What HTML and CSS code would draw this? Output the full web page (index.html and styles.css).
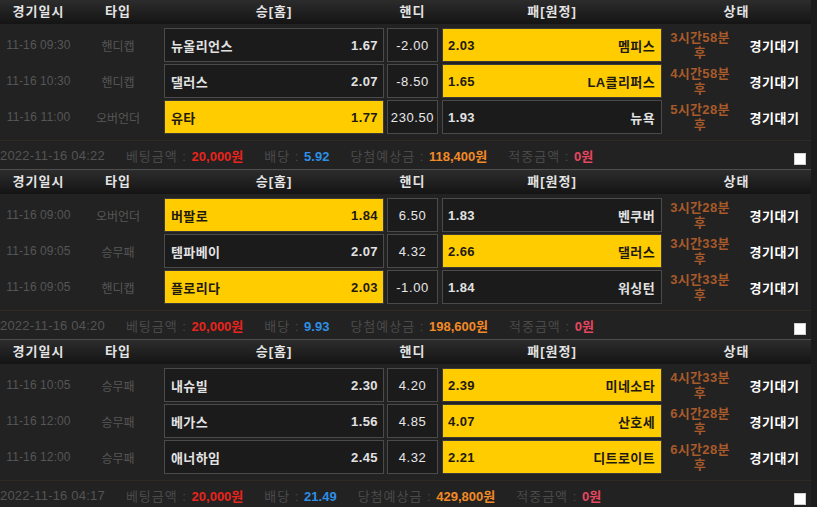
FILE: index.html
```html
<!DOCTYPE html>
<html lang="ko">
<head>
<meta charset="utf-8">
<link rel="stylesheet" href="styles.css">
</head>
<body>
<div class="wrap">

  <section class="bet first">
    <div class="head">
      <div class="c-date">경기일시</div><div class="c-type">타입</div><div class="c-home">승[홈]</div><div class="c-hand">핸디</div><div class="c-away">패[원정]</div><div class="c-stat">상태</div>
    </div>
    <div class="body">
      <div class="row">
        <div class="c-date">11-16 09:30</div><div class="c-type">핸디캡</div>
        <div class="box home"><span class="nm">뉴올리언스</span><span class="od">1.67</span></div>
        <div class="box hand">-2.00</div>
        <div class="box away sel"><span class="od">2.03</span><span class="nm">멤피스</span></div>
        <div class="c-time">3시간58분<br>후</div><div class="c-state">경기대기</div>
      </div>
      <div class="row">
        <div class="c-date">11-16 10:30</div><div class="c-type">핸디캡</div>
        <div class="box home"><span class="nm">댈러스</span><span class="od">2.07</span></div>
        <div class="box hand">-8.50</div>
        <div class="box away sel"><span class="od">1.65</span><span class="nm">LA클리퍼스</span></div>
        <div class="c-time">4시간58분<br>후</div><div class="c-state">경기대기</div>
      </div>
      <div class="row">
        <div class="c-date">11-16 11:00</div><div class="c-type">오버언더</div>
        <div class="box home sel"><span class="nm">유타</span><span class="od">1.77</span></div>
        <div class="box hand">230.50</div>
        <div class="box away"><span class="od">1.93</span><span class="nm">뉴욕</span></div>
        <div class="c-time">5시간28분<br>후</div><div class="c-state">경기대기</div>
      </div>
    </div>
    <div class="foot">
      <span class="f-date">2022-11-16 04:22</span>
      <span class="f-item">베팅금액 : <b class="red">20,000원</b></span>
      <span class="f-item">배당 : <b class="blue">5.92</b></span>
      <span class="f-item">당첨예상금 : <b class="orange">118,400원</b></span>
      <span class="f-item">적중금액 : <b class="pink">0원</b></span>
      <span class="chk"></span>
    </div>
  </section>

  <section class="bet">
    <div class="head">
      <div class="c-date">경기일시</div><div class="c-type">타입</div><div class="c-home">승[홈]</div><div class="c-hand">핸디</div><div class="c-away">패[원정]</div><div class="c-stat">상태</div>
    </div>
    <div class="body">
      <div class="row">
        <div class="c-date">11-16 09:00</div><div class="c-type">오버언더</div>
        <div class="box home sel"><span class="nm">버팔로</span><span class="od">1.84</span></div>
        <div class="box hand">6.50</div>
        <div class="box away"><span class="od">1.83</span><span class="nm">벤쿠버</span></div>
        <div class="c-time">3시간28분<br>후</div><div class="c-state">경기대기</div>
      </div>
      <div class="row">
        <div class="c-date">11-16 09:05</div><div class="c-type">승무패</div>
        <div class="box home"><span class="nm">템파베이</span><span class="od">2.07</span></div>
        <div class="box hand">4.32</div>
        <div class="box away sel"><span class="od">2.66</span><span class="nm">댈러스</span></div>
        <div class="c-time">3시간33분<br>후</div><div class="c-state">경기대기</div>
      </div>
      <div class="row">
        <div class="c-date">11-16 09:05</div><div class="c-type">핸디캡</div>
        <div class="box home sel"><span class="nm">플로리다</span><span class="od">2.03</span></div>
        <div class="box hand">-1.00</div>
        <div class="box away"><span class="od">1.84</span><span class="nm">워싱턴</span></div>
        <div class="c-time">3시간33분<br>후</div><div class="c-state">경기대기</div>
      </div>
    </div>
    <div class="foot">
      <span class="f-date">2022-11-16 04:20</span>
      <span class="f-item">베팅금액 : <b class="red">20,000원</b></span>
      <span class="f-item">배당 : <b class="blue">9.93</b></span>
      <span class="f-item">당첨예상금 : <b class="orange">198,600원</b></span>
      <span class="f-item">적중금액 : <b class="pink">0원</b></span>
      <span class="chk"></span>
    </div>
  </section>

  <section class="bet">
    <div class="head">
      <div class="c-date">경기일시</div><div class="c-type">타입</div><div class="c-home">승[홈]</div><div class="c-hand">핸디</div><div class="c-away">패[원정]</div><div class="c-stat">상태</div>
    </div>
    <div class="body">
      <div class="row">
        <div class="c-date">11-16 10:05</div><div class="c-type">승무패</div>
        <div class="box home"><span class="nm">내슈빌</span><span class="od">2.30</span></div>
        <div class="box hand">4.20</div>
        <div class="box away sel"><span class="od">2.39</span><span class="nm">미네소타</span></div>
        <div class="c-time">4시간33분<br>후</div><div class="c-state">경기대기</div>
      </div>
      <div class="row">
        <div class="c-date">11-16 12:00</div><div class="c-type">승무패</div>
        <div class="box home"><span class="nm">베가스</span><span class="od">1.56</span></div>
        <div class="box hand">4.85</div>
        <div class="box away sel"><span class="od">4.07</span><span class="nm">산호세</span></div>
        <div class="c-time">6시간28분<br>후</div><div class="c-state">경기대기</div>
      </div>
      <div class="row">
        <div class="c-date">11-16 12:00</div><div class="c-type">승무패</div>
        <div class="box home"><span class="nm">애너하임</span><span class="od">2.45</span></div>
        <div class="box hand">4.32</div>
        <div class="box away sel"><span class="od">2.21</span><span class="nm">디트로이트</span></div>
        <div class="c-time">6시간28분<br>후</div><div class="c-state">경기대기</div>
      </div>
    </div>
    <div class="foot">
      <span class="f-date">2022-11-16 04:17</span>
      <span class="f-item">베팅금액 : <b class="red">20,000원</b></span>
      <span class="f-item">배당 : <b class="blue">21.49</b></span>
      <span class="f-item">당첨예상금 : <b class="orange">429,800원</b></span>
      <span class="f-item">적중금액 : <b class="pink">0원</b></span>
      <span class="chk"></span>
    </div>
  </section>

</div>
</body>
</html>
```

FILE: styles.css
```css
* { box-sizing: border-box; }
html, body { margin: 0; padding: 0; }
body {
  background: #1c1c1c;
  font-family: "Liberation Sans", "Noto Sans CJK KR", sans-serif;
  font-size: 13px;
  overflow: hidden;
}
.wrap {
  width: 811px;
  background: #222222;
}
.bet.first { margin-top: -1px; }

.head {
  display: flex;
  height: 25px;
  border-top: 1px solid #4e4e4e;
  background: linear-gradient(#2c2c2c, #141414);
  color: #e4e4e4;
  font-weight: bold;
  line-height: 24px;
  text-align: center;
  letter-spacing: 1px;
}
.c-date { width: 77px; text-align: center; }
.c-type { width: 82px; margin-right: 5px; text-align: center; }
.c-home { width: 220px; }
.c-hand { width: 51px; margin: 0 4px 0 3px; }
.c-away { width: 220px; }
.c-stat { width: 149px; }

.body { padding: 4px 0 6px; display: flex; flex-direction: column; gap: 2px; }
.row {
  display: flex;
  height: 34px;
  align-items: center;
}
.row .c-date { color: #565656; font-size: 12px; letter-spacing: 0.1px; }
.row .c-type { color: #565656; font-size: 12px; }

.box {
  height: 34px;
  border: 1px solid #4a4a4a;
  background: #1b1b1b;
  color: #e2e2e2;
  font-weight: bold;
  display: flex;
  align-items: center;
  justify-content: space-between;
  letter-spacing: 0.4px;
}
.box.home { width: 220px; padding: 0 5px 0 6px; }
.box.away { width: 220px; padding: 0 6px 0 5px; }
.box.hand {
  width: 51px;
  margin: 0 4px 0 3px;
  justify-content: center;
  font-weight: normal;
  letter-spacing: 0.6px;
  padding: 0;
  color: #e8e8e8;
}
.box.sel {
  background: #ffcc00;
  border-color: #3a3a3a;
  color: #1e1a10;
}
.c-time {
  width: 76px;
  text-align: center;
  color: #a85a2a;
  font-weight: bold;
  font-size: 13px;
  line-height: 15px;
  letter-spacing: 0.3px;
}
.c-state {
  width: 73px;
  text-align: center;
  color: #ffffff;
  font-weight: bold;
  letter-spacing: 0.5px;
}

.foot {
  height: 29px;
  border-top: 1px solid #2f2b24;
  display: flex;
  align-items: center;
  color: #4a4a4a;
  white-space: nowrap;
}
.f-date { color: #545454; margin-right: 21px; letter-spacing: 0.2px; }
.f-item { margin-right: 21px; letter-spacing: 1px; }
.f-item b { font-weight: bold; letter-spacing: 0; }
.red { color: #e8241c; }
.blue { color: #2d8fe6; }
.orange { color: #f28a26; }
.pink { color: #e84660; }
.chk {
  margin-left: auto;
  margin-right: 5px;
  margin-top: 7px;
  width: 12px;
  height: 12px;
  background: #ffffff;
  border: 1px solid #d0d0d0;
}
```
